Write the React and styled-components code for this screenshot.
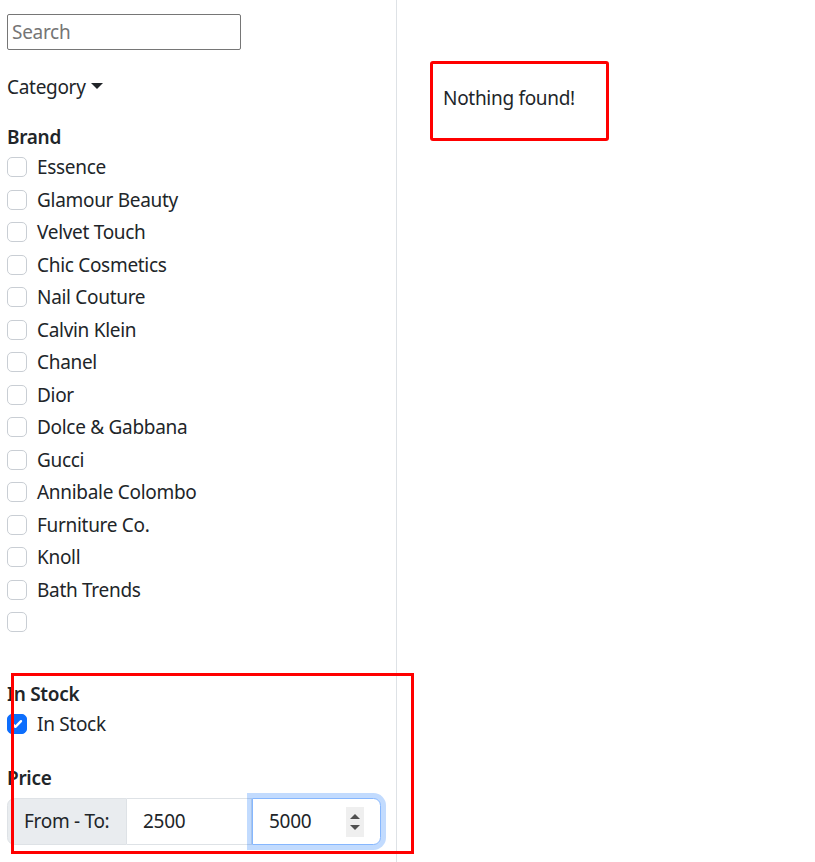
import React from "react";
import styled, { createGlobalStyle } from "styled-components";

const GlobalStyle = createGlobalStyle`
  html { font-size: 20px; }
  body {
    margin: 0;
    font-family: "Noto Sans", "Open Sans", sans-serif;
    font-size: 19px;
    letter-spacing: -0.3px;
    line-height: 1.5;
    color: #212529;
    background: #fff;
  }
  * { box-sizing: border-box; }
`;

const Page = styled.div`
  position: relative;
  display: flex;
  min-height: 100vh;
`;

const Sidebar = styled.aside`
  width: 397px;
  flex: none;
  border-right: 1px solid #dee2e6;
  padding: 14px 15px 0 7px;
`;

const Main = styled.main`
  flex: 1;
  padding: 61px 0 0 33px;
`;

const SearchInput = styled.input`
  display: block;
  width: 234px;
  height: 36px;
  border: 1px solid #767676;
  border-radius: 2px;
  padding: 0 4px;
  font: inherit;
  letter-spacing: inherit;
  color: #212529;
  &::placeholder { color: #757575; }
`;

const DropdownToggle = styled.div`
  margin-top: 22px;
  line-height: 30px;
  display: flex;
  align-items: center;
  &::after {
    content: "";
    display: inline-block;
    margin-left: 5px;
    margin-top: -2px;
    border-top: 6px solid #212529;
    border-left: 6px solid transparent;
    border-right: 6px solid transparent;
  }
`;

const SectionTitle = styled.div`
  margin-top: ${(p) => p.$mt || 20}px;
  font-weight: 600;
  line-height: 30px;
`;

const CheckRow = styled.label`
  display: flex;
  align-items: flex-start;
  min-height: 30px;
  margin-bottom: 2.5px;
  line-height: 30px;
`;

const Box = styled.span`
  flex: none;
  width: 20px;
  height: 20px;
  margin-top: 5px;
  margin-right: 10px;
  border-radius: 5px;
  border: 1px solid ${(p) => (p.$checked ? "#0d6efd" : "#c9ced4")};
  background: ${(p) => (p.$checked ? "#0d6efd" : "#fff")};
  display: flex;
  align-items: center;
  justify-content: center;
`;

const InputGroup = styled.div`
  display: flex;
  margin-top: 5px;
  height: 47px;
`;

const GroupLabel = styled.span`
  width: 120px;
  display: flex;
  align-items: center;
  padding: 0 15px 0 16px;
  background: #e9ecef;
  border: 1px solid #dee2e6;
  border-radius: 7.5px 0 0 7.5px;
  white-space: nowrap;
`;

const GroupInput = styled.input`
  width: ${(p) => p.$w}px;
  border: 1px solid #dee2e6;
  border-left: none;
  padding: 0 15px 0 16px;
  font: inherit;
  letter-spacing: inherit;
  color: #212529;
  outline: none;
  background: #fff;
`;

const FocusedField = styled.div`
  position: relative;
  width: 129px;
  display: flex;
  align-items: center;
  border: 1px solid #86b7fe;
  border-radius: 0 7.5px 7.5px 0;
  box-shadow: 0 0 0 5px rgba(13, 110, 253, 0.25);
  padding: 0 16px 0 16px;
  background: #fff;
  z-index: 1;
`;

const FieldText = styled.input`
  flex: 1;
  min-width: 0;
  border: none;
  padding: 0;
  font: inherit;
  letter-spacing: inherit;
  color: #212529;
  outline: none;
  background: transparent;
`;

const Spinner = styled.span`
  flex: none;
  width: 18px;
  height: 30px;
  background: #efefef;
  display: flex;
  flex-direction: column;
  align-items: center;
  justify-content: space-around;
  padding: 4px 0;
`;

const Arrow = styled.span`
  width: 0;
  height: 0;
  border-left: 5px solid transparent;
  border-right: 5px solid transparent;
  ${(p) =>
    p.$up
      ? "border-bottom: 5px solid #505050;"
      : "border-top: 5px solid #505050;"}
`;

const NotFound = styled.div`
  width: 179px;
  height: 80px;
  border: 3px solid #ff0000;
  border-radius: 3px;
  padding: 19px 10px 0;
  line-height: 30px;
`;

const Annotation = styled.div`
  position: absolute;
  left: 11px;
  top: 673px;
  width: 403px;
  height: 181px;
  border: 3px solid #ff0000;
  pointer-events: none;
`;

const brands = [
  "Essence",
  "Glamour Beauty",
  "Velvet Touch",
  "Chic Cosmetics",
  "Nail Couture",
  "Calvin Klein",
  "Chanel",
  "Dior",
  "Dolce & Gabbana",
  "Gucci",
  "Annibale Colombo",
  "Furniture Co.",
  "Knoll",
  "Bath Trends",
  "",
];

const Check = () => (
  <svg width="16" height="16" viewBox="0 0 20 20">
    <path
      d="M5 10.5l3 3 7-7"
      fill="none"
      stroke="#fff"
      strokeWidth="3"
      strokeLinecap="round"
      strokeLinejoin="round"
    />
  </svg>
);

export default function App() {
  return (
    <>
      <GlobalStyle />
      <Page>
        <Sidebar>
          <SearchInput placeholder="Search" />
          <DropdownToggle>Category</DropdownToggle>
          <SectionTitle>Brand</SectionTitle>
          {brands.map((b, i) => (
            <CheckRow key={i}>
              <Box />
              {b}
            </CheckRow>
          ))}
          <SectionTitle $mt={41.5}>In Stock</SectionTitle>
          <CheckRow>
            <Box $checked>
              <Check />
            </Box>
            In Stock
          </CheckRow>
          <SectionTitle $mt={24.5}>Price</SectionTitle>
          <InputGroup>
            <GroupLabel>From - To:</GroupLabel>
            <GroupInput $w={125} defaultValue="2500" />
            <FocusedField>
              <FieldText defaultValue="5000" />
              <Spinner>
                <Arrow $up />
                <Arrow />
              </Spinner>
            </FocusedField>
          </InputGroup>
        </Sidebar>
        <Main>
          <NotFound>Nothing found!</NotFound>
        </Main>
        <Annotation />
      </Page>
    </>
  );
}
